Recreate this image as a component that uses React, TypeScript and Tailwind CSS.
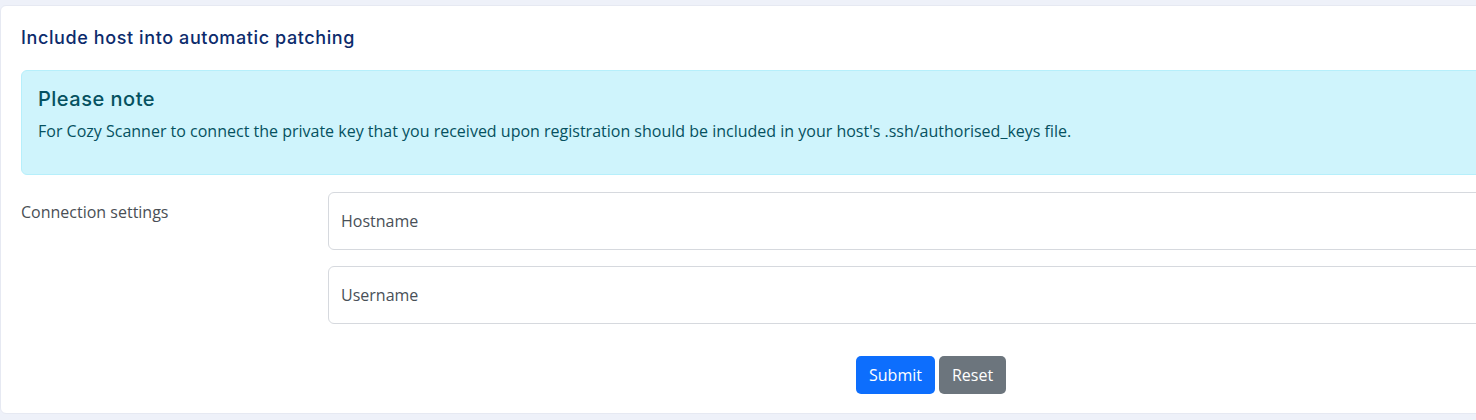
import React from "react";

export default function App() {
  return (
    <div className="w-[1476px] h-[420px] overflow-hidden bg-[#eef1f9] pt-[5px]" style={{ fontFamily: '"Open Sans", "Liberation Sans", sans-serif' }}>
      <div className="w-[1560px] h-[409px] bg-white rounded-[6px] border border-[#e6e9f2] px-[20px] pt-[18px]">
        <h5 className="text-[18px] leading-[27px] font-medium text-[#0c2b6c] tracking-[0.6px]" style={{ fontFamily: 'Inter, "Noto Sans", sans-serif' }}>
          Include host into automatic patching
        </h5>
        <div className="mt-[19px] bg-[#cff4fc] border border-[#b6effb] rounded-[6px] px-[16px] pt-[14px] text-[#055160] h-[105px]">
          <div className="text-[20px] leading-[28px] font-medium tracking-[0.5px]" style={{ fontFamily: 'Inter, "Noto Sans", sans-serif' }}>
            Please note
          </div>
          <p className="mt-[6px] text-[16px] leading-[24px]">
            For Cozy Scanner to connect the private key that you received upon registration should be included in your host's .ssh/authorised_keys file.
          </p>
        </div>
        <div className="mt-[17px] flex">
          <div className="w-[307px] shrink-0 pt-[8px] text-[16px] leading-[24px] text-[#4a4f55]">Connection settings</div>
          <div className="flex-1 flex flex-col gap-[16px]">
            <input
              className="h-[58px] w-full rounded-[6px] border border-[#d6d9de] px-[12px] text-[16px] text-[#495057] placeholder:text-[#495057] outline-none"
              placeholder="Hostname"
            />
            <input
              className="h-[58px] w-full rounded-[6px] border border-[#d6d9de] px-[12px] text-[16px] text-[#495057] placeholder:text-[#495057] outline-none"
              placeholder="Username"
            />
          </div>
        </div>
        <div className="mt-[32px] flex gap-[4px] pl-[835px]">
          <button className="h-[38px] px-[13px] rounded-[5px] bg-[#0d6efd] text-white text-[16px] leading-[24px]">Submit</button>
          <button className="h-[38px] px-[13px] rounded-[5px] bg-[#6c757d] text-white text-[16px] leading-[24px]">Reset</button>
        </div>
      </div>
    </div>
  );
}
